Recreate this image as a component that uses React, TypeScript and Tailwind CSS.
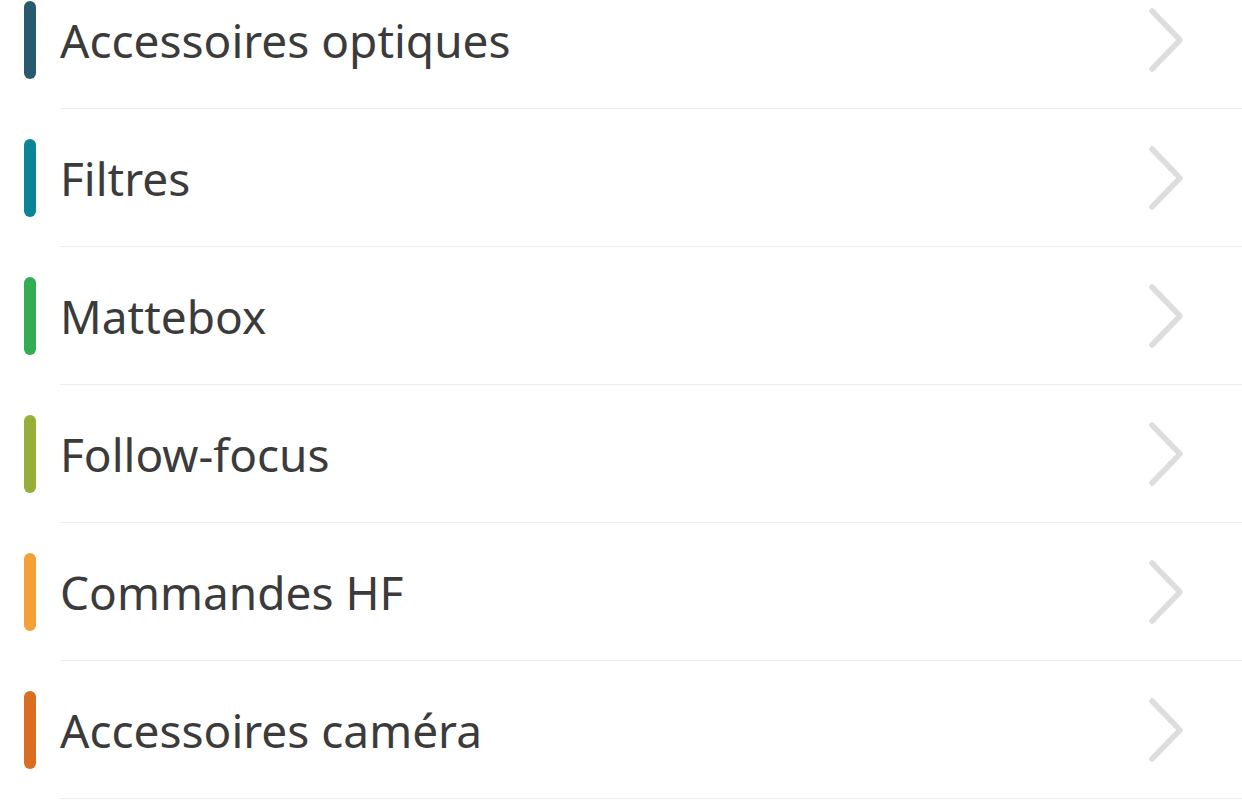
const categories = [
  { name: 'Accessoires optiques', color: 'bg-[#275a6f]' },
  { name: 'Filtres', color: 'bg-[#0b8497]' },
  { name: 'Mattebox', color: 'bg-[#33ad51]' },
  { name: 'Follow-focus', color: 'bg-[#97ae38]' },
  { name: 'Commandes HF', color: 'bg-[#f3a136]' },
  { name: 'Accessoires caméra', color: 'bg-[#d96d22]' },
];

function Chevron() {
  return (
    <svg width="40" height="66" viewBox="0 0 40 66" fill="none" className="shrink-0">
      <path d="M7 4 L35 33 L7 62" stroke="#dddddd" strokeWidth="5.5" strokeLinecap="round" strokeLinejoin="round" />
    </svg>
  );
}

export default function App() {
  return (
    <div className="min-h-screen bg-white overflow-hidden" style={{ fontFamily: '"Noto Sans", "Open Sans", sans-serif' }}>
      <ul className="-mt-[29px]">
        {categories.map((c) => (
          <li key={c.name} className="flex h-[138px] items-center pl-6">
            <span className={`w-3 h-[78px] rounded-full shrink-0 ${c.color}`} />
            <div className="ml-6 flex h-full flex-1 items-center justify-between border-b border-[#ececec] pr-[57px]">
              <span className="text-[46px] text-[#3b3b3b] leading-none">{c.name}</span>
              <Chevron />
            </div>
          </li>
        ))}
      </ul>
    </div>
  );
}
